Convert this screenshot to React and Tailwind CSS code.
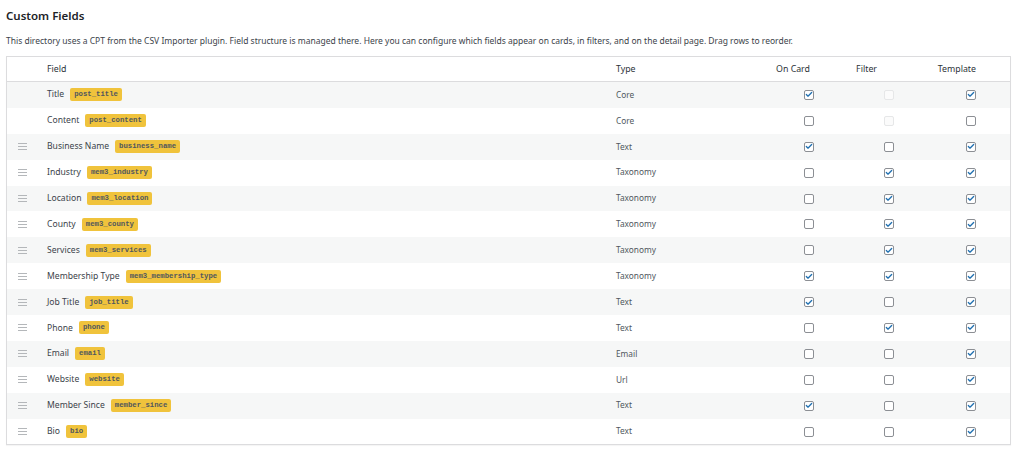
import { Check } from 'lucide-react';

// Field rows: label, meta key, type, and the three visibility flags.
// `null` marks a flag that can't be changed for that field.
const FIELDS = [
  { label: 'Title', key: 'post_title', type: 'Core', card: true, filter: null, template: true, locked: true },
  { label: 'Content', key: 'post_content', type: 'Core', card: false, filter: null, template: false, locked: true },
  { label: 'Business Name', key: 'business_name', type: 'Text', card: true, filter: false, template: true },
  { label: 'Industry', key: 'mem3_industry', type: 'Taxonomy', card: false, filter: true, template: true },
  { label: 'Location', key: 'mem3_location', type: 'Taxonomy', card: false, filter: true, template: true },
  { label: 'County', key: 'mem3_county', type: 'Taxonomy', card: false, filter: true, template: true },
  { label: 'Services', key: 'mem3_services', type: 'Taxonomy', card: false, filter: true, template: true },
  { label: 'Membership Type', key: 'mem3_membership_type', type: 'Taxonomy', card: true, filter: true, template: true },
  { label: 'Job Title', key: 'job_title', type: 'Text', card: true, filter: false, template: true },
  { label: 'Phone', key: 'phone', type: 'Text', card: false, filter: true, template: true },
  { label: 'Email', key: 'email', type: 'Email', card: false, filter: false, template: true },
  { label: 'Website', key: 'website', type: 'Url', card: false, filter: false, template: true },
  { label: 'Member Since', key: 'member_since', type: 'Text', card: true, filter: false, template: true },
  { label: 'Bio', key: 'bio', type: 'Text', card: false, filter: false, template: true },
];

const COLS = 'grid grid-cols-[30px_570px_153px_70px_80px_100px]';

function Box({ value }) {
  if (value === null) {
    return <span className="block w-[10px] h-[10px] rounded-[2px] border border-[#e6e7e8] bg-[#fbfbfb]" />;
  }
  return (
    <span className="flex items-center justify-center w-[10px] h-[10px] rounded-[2px] border border-[#8c8f94] bg-white">
      {value && <Check className="w-[9px] h-[9px] text-[#2271b1]" strokeWidth={4} />}
    </span>
  );
}

function Handle() {
  return (
    <span className="flex flex-col gap-[2px] w-[9px]">
      <span className="h-px bg-[#b4b7ba]" />
      <span className="h-px bg-[#b4b7ba]" />
      <span className="h-px bg-[#b4b7ba]" />
    </span>
  );
}

export default function App() {
  return (
    <div className="bg-white w-[1024px] h-[456px] px-[6px] pt-[8px] font-['Noto_Sans',sans-serif] text-[#3c434a]">
      <h2 className="text-[11.5px] font-semibold text-[#1d2327] leading-[16px]">Custom Fields</h2>
      <p className="mt-[11px] text-[8.5px] leading-[12px] text-[#3c434a] whitespace-nowrap">
        This directory uses a CPT from the CSV Importer plugin. Field structure is managed there. Here you can configure which fields appear on cards, in filters, and on the detail page. Drag rows to reorder.
      </p>

      <div className="mt-[9px] w-[1005px] border border-[#dcdcde] shadow-[0_1px_1px_rgba(0,0,0,0.04)]">
        <div className={`${COLS} h-[25px] pt-[2px] items-center border-b border-[#dcdcde] text-[8.8px] text-[#2c3338]`}>
          <span />
          <span className="pl-[10px]">Field</span>
          <span className="pl-[9px]">Type</span>
          <span className="text-right pr-[20px] -ml-[40px]">On Card</span>
          <span className="text-right pr-[33px]">Filter</span>
          <span className="text-right pr-[34px]">Template</span>
        </div>

        {FIELDS.map((f, i) => (
          <div
            key={f.key}
            className={`${COLS} h-[25.9px] items-center text-[8.6px] ${i % 2 === 0 ? 'bg-[#f6f7f7]' : 'bg-white'}`}
          >
            <span className="flex justify-center pl-[1px]">{!f.locked && <Handle />}</span>
            <span className="flex items-center gap-[6px] pl-[10px]">
              <span className="text-[#3c434a]">{f.label}</span>
              <code className="h-[13px] flex items-center px-[4px] rounded-[2px] bg-[#f0c33c] text-[#50575e] font-['Liberation_Mono',monospace] text-[7.3px] font-bold">
                {f.key}
              </code>
            </span>
            <span className="pl-[9px] text-[8.3px] text-[#50575e]">{f.type}</span>
            <span className="flex justify-end pr-[16px]"><Box value={f.card} /></span>
            <span className="flex justify-end pr-[16px]"><Box value={f.filter} /></span>
            <span className="flex justify-end pr-[34px]"><Box value={f.template} /></span>
          </div>
        ))}
      </div>
    </div>
  );
}
